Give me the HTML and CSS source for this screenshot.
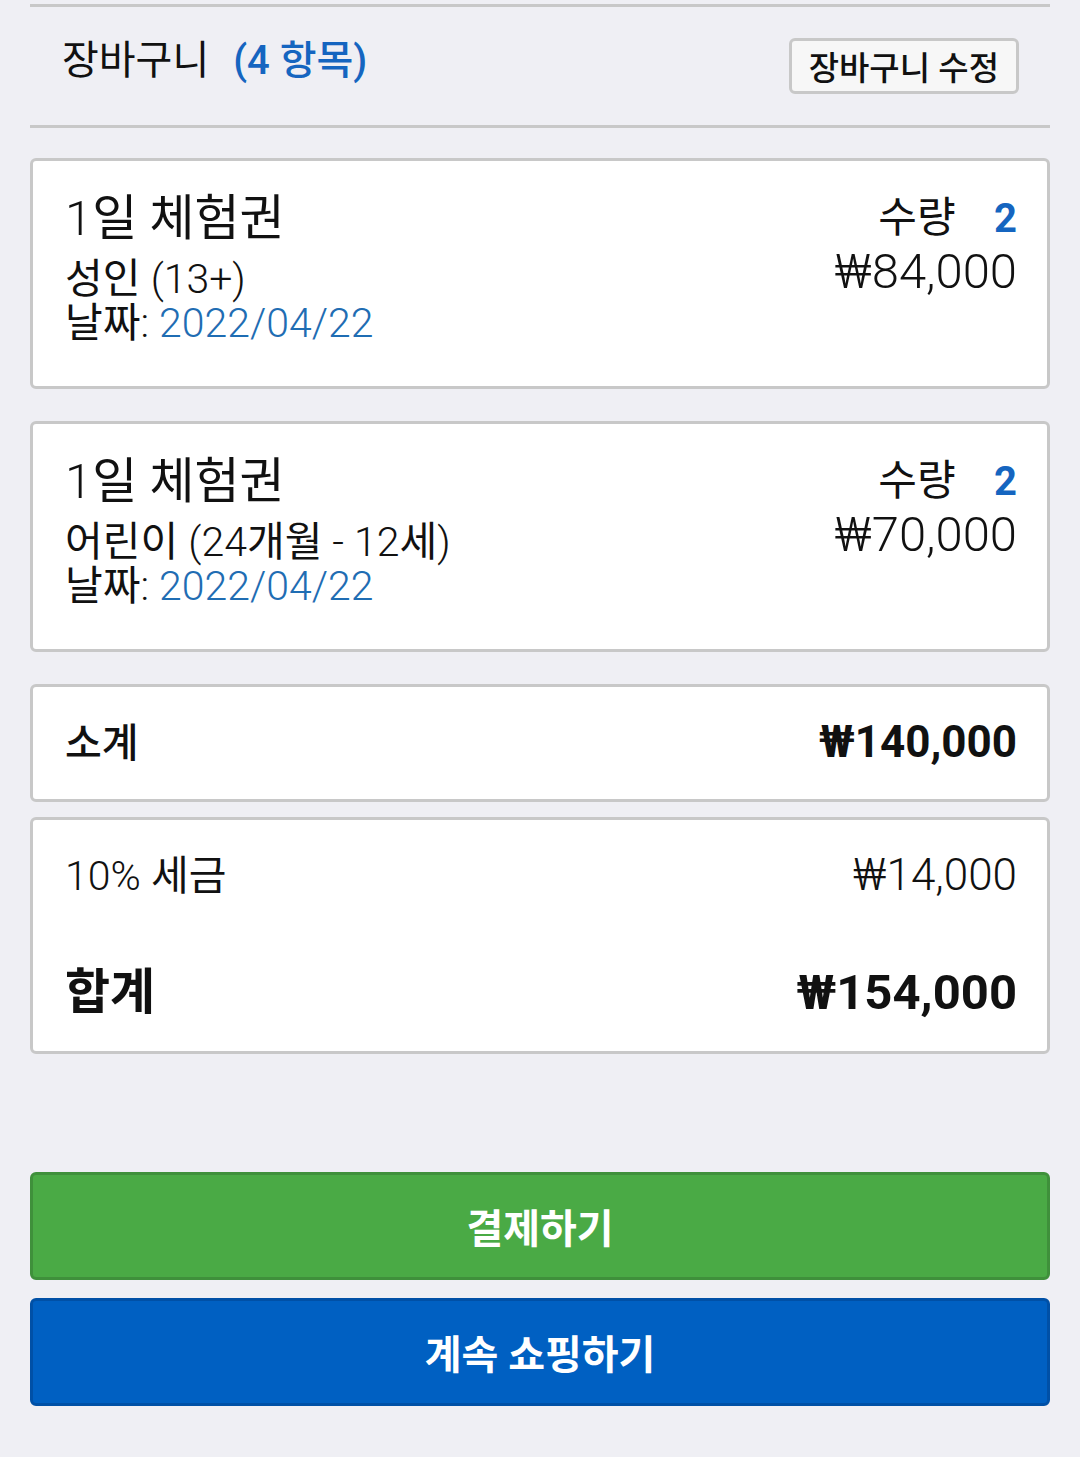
FILE: index.html
```html
<!DOCTYPE html>
<html lang="ko">
<head>
    <meta charset="UTF-8">
    <meta name="viewport" content="width=device-width, initial-scale=1.0">
    <title>장바구니</title>
    <link rel="stylesheet" href="styles.css">
</head>
<body>
    <div class="page">
        <header class="cart-header">
            <h1 class="cart-title">장바구니 <span class="count">(4 항목)</span></h1>
            <button class="edit-button">장바구니 수정</button>
        </header>

        <div class="card item">
            <div class="item-info">
                <div class="item-name"><span class="thin">1</span>일 체험권</div>
                <div class="item-line">성인 <span class="thin">(13+)</span></div>
                <div class="item-line">날짜<span class="thin">: </span><span class="date thin">2022/04/22</span></div>
            </div>
            <div class="item-side">
                <div class="item-qty">수량 <span class="qty">2</span></div>
                <div class="item-price">₩84,000</div>
            </div>
        </div>

        <div class="card item">
            <div class="item-info">
                <div class="item-name"><span class="thin">1</span>일 체험권</div>
                <div class="item-line">어린이 <span class="thin">(24</span>개월<span class="thin"> - 12</span>세<span class="thin">)</span></div>
                <div class="item-line">날짜<span class="thin">: </span><span class="date thin">2022/04/22</span></div>
            </div>
            <div class="item-side">
                <div class="item-qty">수량 <span class="qty">2</span></div>
                <div class="item-price">₩70,000</div>
            </div>
        </div>

        <div class="card subtotal">
            <span class="subtotal-label">소계</span>
            <span class="subtotal-value">₩140,000</span>
        </div>

        <div class="card totals">
            <div class="tax-row">
                <span><span class="thin">10%</span> 세금</span>
                <span class="tax-value thin">₩14,000</span>
            </div>
            <div class="total-row">
                <span>합계</span>
                <span>₩154,000</span>
            </div>
        </div>

        <div class="actions">
            <button class="action-button checkout">결제하기</button>
            <button class="action-button continue">계속 쇼핑하기</button>
        </div>
    </div>
</body>
</html>
```

FILE: styles.css
```css
* {
    margin: 0;
    padding: 0;
    box-sizing: border-box;
    font-family: Roboto, "Noto Sans CJK KR", sans-serif;
}

body {
    background-color: #efeff4;
    color: #111;
}

.page {
    padding: 4px 30px 30px;
}

.thin {
    font-weight: 300;
}

.cart-header {
    display: flex;
    align-items: center;
    justify-content: space-between;
    height: 124px;
    padding: 0 31px 0 32px;
    border-top: 3px solid #c8c8c8;
    border-bottom: 3px solid #c8c8c8;
    margin-bottom: 30px;
}

.cart-title {
    font-size: 40px;
    font-weight: 400;
    line-height: 50px;
    margin-bottom: 10px;
}

.count {
    margin-left: 14px;
    color: #1565c0;
    font-weight: 500;
}

.edit-button {
    height: 56px;
    padding: 0 17px;
    font-size: 33px;
    font-weight: 500;
    color: #111;
    background: #f7f7f7;
    border: 3px solid #c8c8c8;
    border-radius: 6px;
}

.card {
    background: white;
    border: 3px solid #c8c8c8;
    border-radius: 6px;
}

.item {
    display: flex;
    justify-content: space-between;
    padding: 29px 30px 41px 32px;
    margin-bottom: 32px;
}

.item-name {
    font-size: 49px;
    line-height: 58px;
    margin-bottom: 9px;
}

.item-line {
    font-size: 41px;
    line-height: 44px;
}

.date {
    color: #1f6db3;
}

.item-side {
    text-align: right;
}

.item-qty {
    font-size: 42px;
    line-height: 56px;
}

.qty {
    margin-left: 28px;
    font-size: 40px;
    font-weight: 700;
    color: #1565c0;
}

.item-price {
    font-size: 49px;
    font-weight: 300;
    line-height: 50px;
}

.subtotal {
    display: flex;
    justify-content: space-between;
    align-items: baseline;
    padding: 27px 30px 27px 32px;
    line-height: 56px;
    margin-bottom: 15px;
}

.subtotal-label {
    font-size: 40px;
    font-weight: 500;
}

.subtotal-value {
    font-size: 44px;
    font-weight: 700;
}

.totals {
    padding: 27px 30px 28px 32px;
}

.tax-row,
.total-row {
    display: flex;
    justify-content: space-between;
    align-items: baseline;
}

.tax-row {
    font-size: 41px;
    line-height: 56px;
    margin-bottom: 59px;
}

.tax-value {
    font-size: 44px;
}

.total-row {
    font-size: 49px;
    font-weight: 700;
    line-height: 60px;
}

.actions {
    display: flex;
    flex-direction: column;
    gap: 18px;
    margin-top: 118px;
}

.action-button {
    height: 108px;
    font-size: 40px;
    font-weight: 700;
    color: white;
    border-radius: 6px;
    border: 3px solid;
}

.checkout {
    background-color: #4aaa45;
    border-color: #3f903b;
}

.continue {
    background-color: #0060c2;
    border-color: #0050a6;
}
```
